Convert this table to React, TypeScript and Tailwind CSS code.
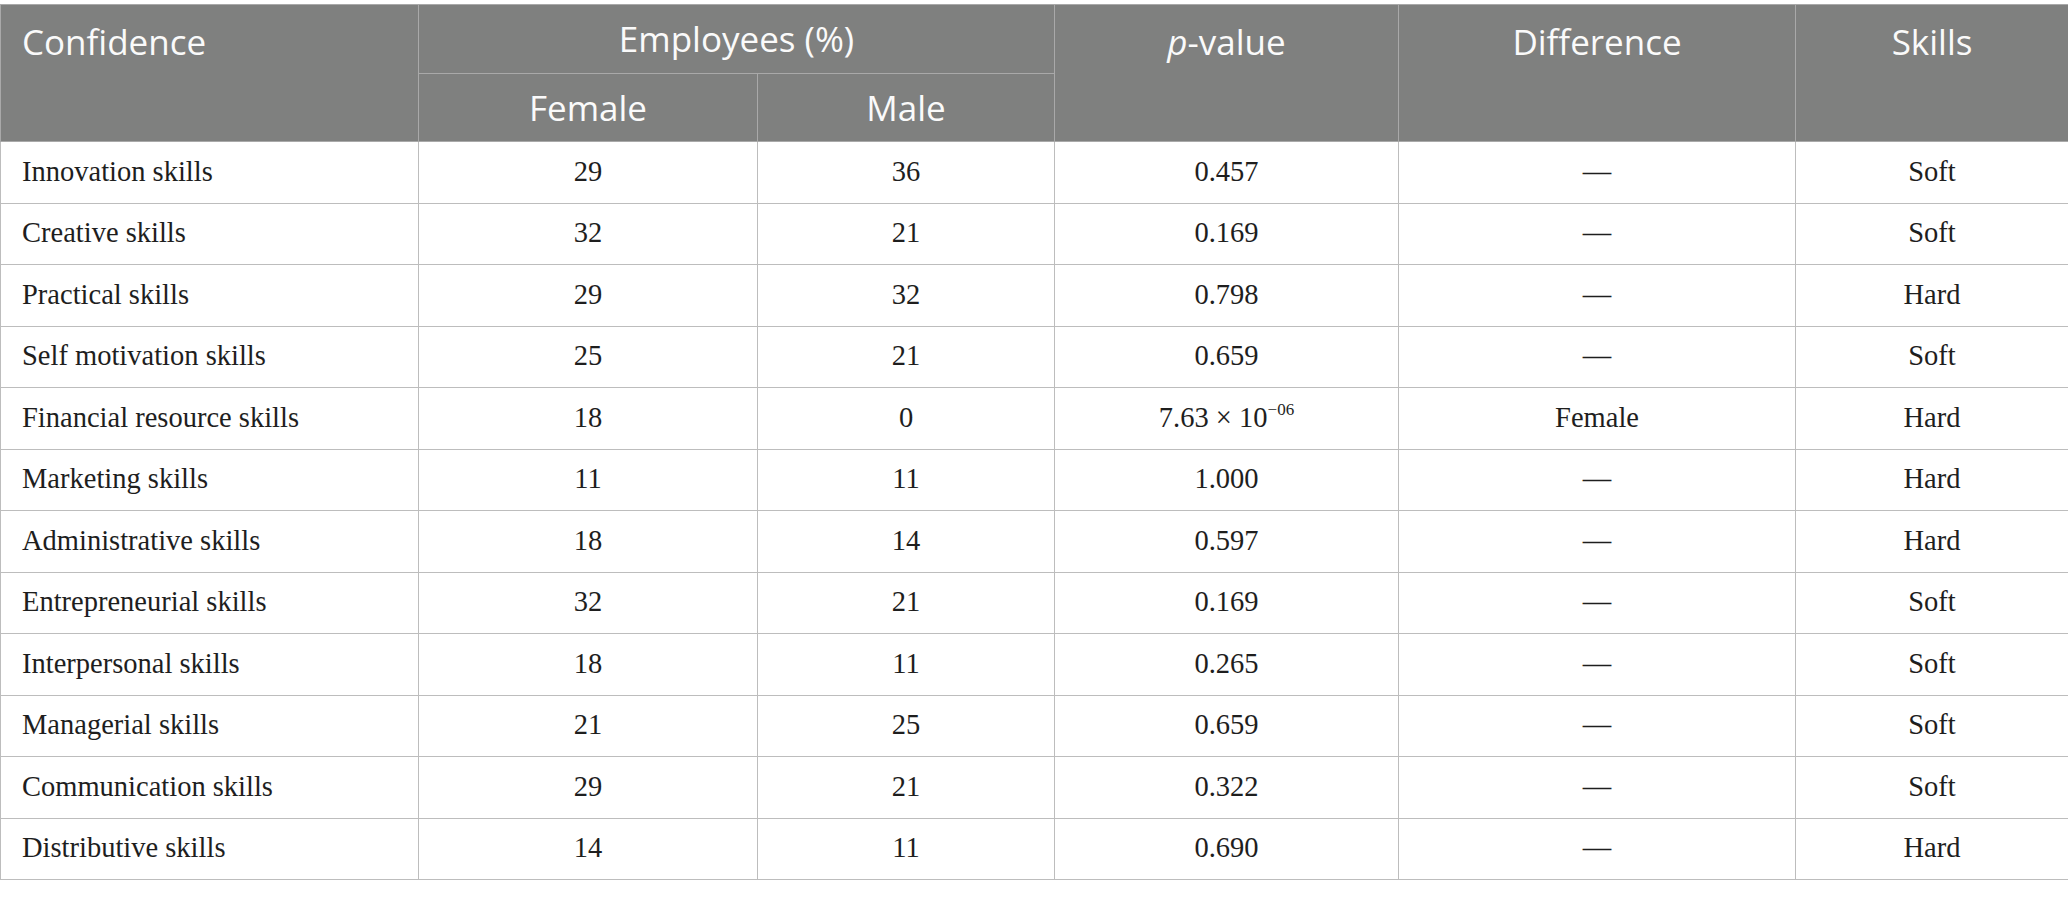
const rows: [string, string, string, string | null, string, string][] = [
  ["Innovation skills", "29", "36", "0.457", "—", "Soft"],
  ["Creative skills", "32", "21", "0.169", "—", "Soft"],
  ["Practical skills", "29", "32", "0.798", "—", "Hard"],
  ["Self motivation skills", "25", "21", "0.659", "—", "Soft"],
  ["Financial resource skills", "18", "0", null, "Female", "Hard"],
  ["Marketing skills", "11", "11", "1.000", "—", "Hard"],
  ["Administrative skills", "18", "14", "0.597", "—", "Hard"],
  ["Entrepreneurial skills", "32", "21", "0.169", "—", "Soft"],
  ["Interpersonal skills", "18", "11", "0.265", "—", "Soft"],
  ["Managerial skills", "21", "25", "0.659", "—", "Soft"],
  ["Communication skills", "29", "21", "0.322", "—", "Soft"],
  ["Distributive skills", "14", "11", "0.690", "—", "Hard"],
];

const th =
  "border border-[#a9a9a9] font-normal text-[35px] leading-none text-[#fafafa]";
const td = "border border-[#bdbdbd] text-center";

const App = () => {
  return (
    <div className="w-[2068px] h-[897px] bg-white pt-[4px]">
      <table
        className="w-[2068px] table-fixed border-collapse"
        style={{ fontFamily: '"Liberation Serif", serif' }}
      >
        <colgroup>
          <col className="w-[418px]" />
          <col className="w-[339px]" />
          <col className="w-[297px]" />
          <col className="w-[344px]" />
          <col className="w-[397px]" />
          <col className="w-[273px]" />
        </colgroup>
        <thead
          className="bg-[#7f807f]"
          style={{ fontFamily: '"Open Sans", "Noto Sans", sans-serif' }}
        >
          <tr className="h-[68.5px]">
            <th rowSpan={2} className={`${th} text-left align-top pl-[21px] pt-[19px]`}>
              Confidence
            </th>
            <th colSpan={2} className={`${th} text-center`}>
              Employees (%)
            </th>
            <th rowSpan={2} className={`${th} text-center align-top pt-[19px]`}>
              <i>p</i>-value
            </th>
            <th rowSpan={2} className={`${th} text-center align-top pt-[19px]`}>
              Difference
            </th>
            <th rowSpan={2} className={`${th} text-center align-top pt-[19px]`}>
              Skills
            </th>
          </tr>
          <tr className="h-[68.5px]">
            <th className={`${th} text-center`}>Female</th>
            <th className={`${th} text-center`}>Male</th>
          </tr>
        </thead>
        <tbody className="text-[28.5px] text-[#1e1e1e]">
          {rows.map((r) => (
            <tr key={r[0]} className="h-[61.5px]">
              <td className="border border-[#bdbdbd] text-left pl-[21px]">{r[0]}</td>
              <td className={td}>{r[1]}</td>
              <td className={td}>{r[2]}</td>
              <td className={td}>
                {r[3] ?? (
                  <span>
                    7.63 × 10<sup className="text-[17px] relative -top-[12px]">−06</sup>
                  </span>
                )}
              </td>
              <td className={td}>{r[4]}</td>
              <td className={td}>{r[5]}</td>
            </tr>
          ))}
        </tbody>
      </table>
    </div>
  );
};

export default App;
